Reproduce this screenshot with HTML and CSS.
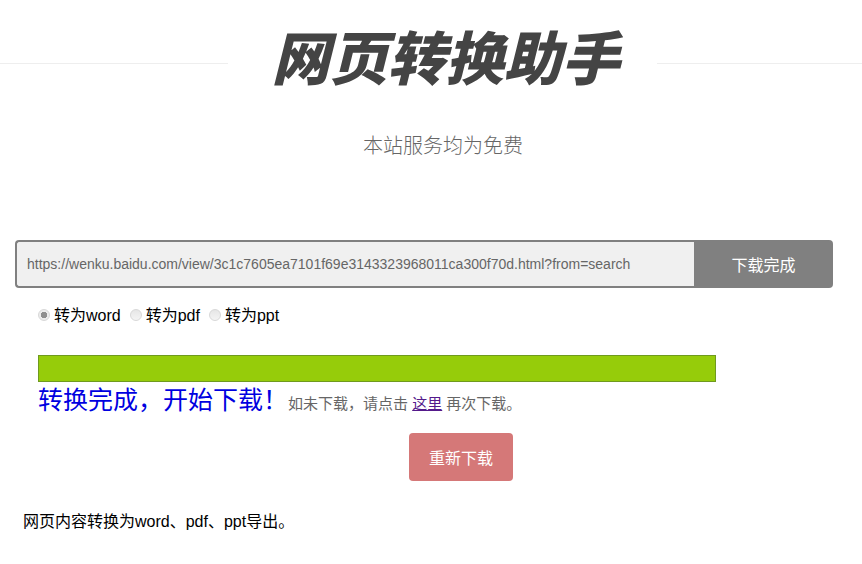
FILE: index.html
```html
<!DOCTYPE html>
<html lang="zh-CN">
<head>
    <meta charset="UTF-8">
    <meta name="viewport" content="width=device-width, initial-scale=1.0">
    <title>网页转换助手</title>
    <link rel="stylesheet" href="styles.css">
</head>
<body>
    <div class="title-row">
        <div class="title-line title-line-left"></div>
        <h1 class="title">网页转换助手</h1>
        <div class="title-line"></div>
    </div>
    <p class="subtitle">本站服务均为免费</p>

    <form class="url-form">
        <input class="url-input" type="text" value="https://wenku.baidu.com/view/3c1c7605ea7101f69e3143323968011ca300f70d.html?from=search">
        <button class="url-button" type="button">下载完成</button>
    </form>

    <div class="format-row">
        <label class="format"><input type="radio" name="format" checked>转为word</label>
        <label class="format"><input type="radio" name="format">转为pdf</label>
        <label class="format"><input type="radio" name="format">转为ppt</label>
    </div>

    <div class="progress"></div>
    <div class="status">
        <span class="status-main">转换完成，开始下载！</span>
        <span class="status-note">如未下载，请点击 <a href="#">这里</a> 再次下载。</span>
    </div>

    <div class="again-row">
        <button class="again-button" type="button">重新下载</button>
    </div>

    <p class="footer-text">网页内容转换为word、pdf、ppt导出。</p>
</body>
</html>
```

FILE: styles.css
```css
body {
    margin: 0;
    background-color: #fff;
    color: #000;
    font-family: "Liberation Sans", "Noto Sans CJK SC", sans-serif;
}

.title-row {
    display: flex;
    align-items: center;
    height: 126px;
}

.title-line {
    flex: 1;
    height: 1px;
    background-color: #eee;
}

.title-line-left {
    flex: none;
    width: 228px;
}

.title {
    box-sizing: border-box;
    width: 429px;
    margin: 0;
    padding: 0 0 6px 6px;
    color: #444;
    font-size: 58px;
    font-style: italic;
    font-weight: 900;
    line-height: 60px;
    text-align: center;
}

.subtitle {
    margin: 5px 0 0 24px;
    color: #666;
    font-size: 20px;
    font-weight: 300;
    line-height: 30px;
    text-align: center;
}

.url-form {
    display: flex;
    width: 818px;
    height: 48px;
    margin: 79px 0 0 15px;
}

.url-input {
    flex: 1;
    min-width: 0;
    box-sizing: border-box;
    padding: 0 10px;
    background-color: #f0f0f0;
    border: 2px solid #808080;
    border-right: none;
    border-radius: 4px 0 0 4px;
    color: #666;
    font-family: inherit;
    font-size: 14px;
    outline: none;
}

.url-button {
    width: 139px;
    background-color: #808080;
    border: none;
    border-radius: 0 4px 4px 0;
    color: #fff;
    font-family: inherit;
    font-size: 16px;
}

.format-row {
    display: flex;
    gap: 9px;
    height: 24px;
    margin: 16px 0 0 38px;
    font-size: 16px;
    line-height: 24px;
}

.format {
    display: flex;
    align-items: center;
}

.format input {
    appearance: none;
    width: 12px;
    height: 12px;
    margin: 0 4px 2px 0;
    background: linear-gradient(#e6e6e6, #f4f4f4);
    border: 1px solid #d8d8d8;
    border-radius: 50%;
    box-sizing: border-box;
}

.format input:checked {
    background: radial-gradient(circle, #8f8f8f 0 3px, #ececec 3.5px);
}

.progress {
    box-sizing: border-box;
    width: 678px;
    height: 27px;
    margin: 27px 0 0 38px;
    background-color: #96cc0a;
    border: 1px solid #6f9a1e;
}

.status {
    display: flex;
    align-items: baseline;
    margin-left: 38px;
}

.status-main {
    color: #0000e0;
    font-size: 25px;
    line-height: 36px;
}

.status-note {
    color: #666;
    font-size: 15px;
}

.status-note a {
    color: #551a8b;
}

.again-row {
    display: flex;
    margin: 15px 0 0 409px;
}

.again-button {
    width: 104px;
    height: 48px;
    background-color: #d57878;
    border: none;
    border-radius: 4px;
    color: #fff;
    font-family: inherit;
    font-size: 16px;
}

.footer-text {
    margin: 30px 0 0 23px;
    font-size: 16px;
    line-height: 22px;
}
```
